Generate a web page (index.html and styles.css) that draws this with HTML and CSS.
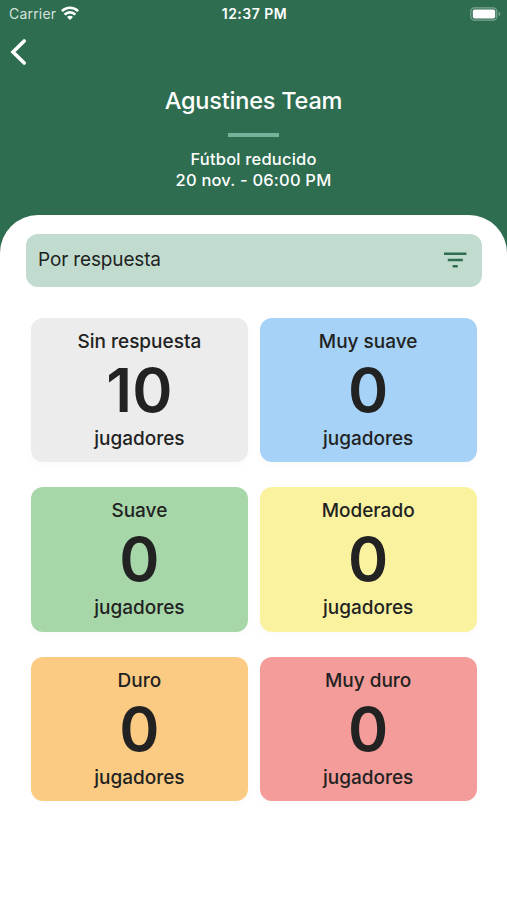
FILE: index.html
```html
<!DOCTYPE html>
<html lang="es">
<head>
  <meta charset="UTF-8">
  <title>Agustines Team</title>
  <meta name="viewport" content="width=device-width, initial-scale=1.0">
  <link rel="stylesheet" href="styles.css">
</head>
<body>
  <header class="header">
    <div class="status-bar">
      <div class="carrier">
        <span>Carrier</span>
        <svg width="18" height="14" viewBox="0 0 18 14" fill="none" stroke="#fff" stroke-width="2.6">
          <path d="M0.9 5.1a11.6 11.6 0 0 1 16.2 0"/>
          <path d="M3.6 8.6a7.6 7.6 0 0 1 10.8 0"/>
          <path d="M9 14L6 11a4.2 4.2 0 0 1 6 0z" fill="#fff" stroke="none"/>
        </svg>
      </div>
      <div class="time">12:37 PM</div>
      <div class="battery">
        <svg width="31" height="14" viewBox="0 0 31 14">
          <rect x="0.8" y="0.8" width="26" height="12.4" rx="3.6" fill="none" stroke="#7fa894" stroke-width="1.2"/>
          <rect x="2.8" y="2.4" width="22.4" height="9.2" rx="1.8" fill="#fff"/>
          <path d="M28.6 4.8v4.4c1.1-.4 1.7-1.2 1.7-2.2s-.6-1.8-1.7-2.2z" fill="#7fa894"/>
        </svg>
      </div>
    </div>
    <button class="back" type="button" aria-label="Volver">
      <svg width="18" height="28" viewBox="0 0 18 28" fill="none" stroke="#fff" stroke-width="3.6" stroke-linecap="round">
        <path d="M15.2 3L4 14l11.2 11"/>
      </svg>
    </button>
    <h1 class="title">Agustines Team</h1>
    <div class="divider"></div>
    <p class="info">Fútbol reducido<br>20 nov. - 06:00 PM</p>
  </header>

  <main class="content">
    <div class="filter">
      <span class="filter-text">Por respuesta</span>
      <svg width="24" height="16" viewBox="0 0 24 16" fill="none" stroke="#2e6d50" stroke-width="2.5">
        <path d="M1 1.7h22.4M4.8 8h15M9.6 14.2h5.2"/>
      </svg>
    </div>

    <div class="cards">
      <div class="card sin-respuesta">
        <span class="label">Sin respuesta</span>
        <strong class="count">10</strong>
        <span class="label">jugadores</span>
      </div>
      <div class="card muy-suave">
        <span class="label">Muy suave</span>
        <strong class="count">0</strong>
        <span class="label">jugadores</span>
      </div>
      <div class="card suave">
        <span class="label">Suave</span>
        <strong class="count">0</strong>
        <span class="label">jugadores</span>
      </div>
      <div class="card moderado">
        <span class="label">Moderado</span>
        <strong class="count">0</strong>
        <span class="label">jugadores</span>
      </div>
      <div class="card duro">
        <span class="label">Duro</span>
        <strong class="count">0</strong>
        <span class="label">jugadores</span>
      </div>
      <div class="card muy-duro">
        <span class="label">Muy duro</span>
        <strong class="count">0</strong>
        <span class="label">jugadores</span>
      </div>
    </div>
  </main>
</body>
</html>
```
FILE: styles.css
```css
* {
  box-sizing: border-box;
}
body {
  margin: 0;
  min-height: 100vh;
  display: flex;
  flex-direction: column;
  background: #2e6d50;
  color: #222;
  font-family: Inter, sans-serif;
}
.header {
  height: 214.5px;
  color: #fff;
  text-align: center;
}
.status-bar {
  display: grid;
  grid-template-columns: 1fr auto 1fr;
  align-items: center;
  height: 27px;
  padding: 0 6px 0 9px;
  font-size: 14px;
}
.carrier {
  display: flex;
  align-items: center;
  gap: 5px;
  color: #d5e2dc;
  letter-spacing: 0.2px;
}
.carrier svg {
  margin-top: -2px;
}
.time {
  font-weight: 600;
  letter-spacing: 0.5px;
  margin-right: 1px;
}
.battery {
  display: flex;
  justify-content: flex-end;
}
.back {
  display: block;
  margin: 11px 0 0 9px;
  padding: 0;
  border: none;
  background: none;
}
.back svg {
  display: block;
}
.title {
  margin: 20px 0 0;
  font-size: 23.5px;
  font-weight: 500;
  line-height: 30px;
  letter-spacing: -0.2px;
}
.divider {
  width: 51px;
  height: 4px;
  margin: 16.5px auto 0;
  background: #74b49a;
}
.info {
  margin: 12.5px 0 0;
  font-size: 16.5px;
  font-weight: 500;
  line-height: 21px;
  letter-spacing: 0.2px;
}
.content {
  flex: 1;
  padding: 19px 25.5px 0 26px;
  background: #fff;
  border-radius: 38px 38px 0 0;
}
.filter {
  display: flex;
  align-items: center;
  justify-content: space-between;
  height: 53.5px;
  padding: 0 15px 0 12px;
  border-radius: 12px;
  background: #c1dccf;
}
.filter-text {
  padding-bottom: 2px;
  font-size: 19px;
  letter-spacing: -0.15px;
}
.cards {
  display: grid;
  grid-template-columns: 1fr 1fr;
  gap: 25px 12px;
  padding: 30.5px 5px 0;
}
.card {
  display: flex;
  flex-direction: column;
  align-items: center;
  height: 144.5px;
  padding-top: 12px;
  border-radius: 12px;
  box-shadow: 0 4px 10px rgba(0, 0, 0, 0.02);
}
.label {
  font-size: 19px;
  font-weight: 500;
  line-height: 24px;
}
.count {
  font-size: 61px;
  font-weight: 600;
  line-height: 73px;
}
.sin-respuesta {
  background: #ececec;
}
.muy-suave {
  background: #a5d2f6;
}
.suave {
  background: #a7d7a9;
}
.moderado {
  background: #fbf2a0;
}
.duro {
  background: #fccb83;
}
.muy-duro {
  background: #f39c99;
}
```
